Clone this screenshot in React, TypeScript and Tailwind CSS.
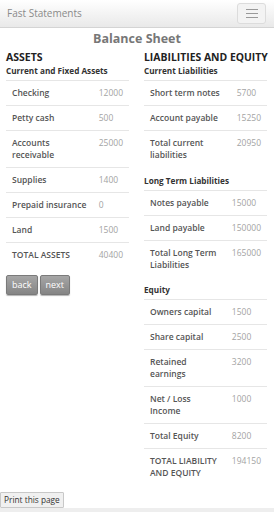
import React from "react";

type Row = { label: string; value: string };

const assets: Row[] = [
  { label: "Checking", value: "12000" },
  { label: "Petty cash", value: "500" },
  { label: "Accounts receivable", value: "25000" },
  { label: "Supplies", value: "1400" },
  { label: "Prepaid insurance", value: "0" },
  { label: "Land", value: "1500" },
  { label: "TOTAL ASSETS", value: "40400" },
];

const current: Row[] = [
  { label: "Short term notes", value: "5700" },
  { label: "Account payable", value: "15250" },
  { label: "Total current liabilities", value: "20950" },
];

const longTerm: Row[] = [
  { label: "Notes payable", value: "15000" },
  { label: "Land payable", value: "150000" },
  { label: "Total Long Term Liabilities", value: "165000" },
];

const equity: Row[] = [
  { label: "Owners capital", value: "1500" },
  { label: "Share capital", value: "2500" },
  { label: "Retained earnings", value: "3200" },
  { label: "Net / Loss Income", value: "1000" },
  { label: "Total Equity", value: "8200" },
  { label: "TOTAL LIABILITY AND EQUITY", value: "194150" },
];

function Table({ rows, narrow }: { rows: Row[]; narrow?: boolean }) {
  return (
    <table className="w-full border-collapse">
      <tbody>
        {rows.map((r, i) => (
          <tr
            key={i}
            className={i < rows.length - 1 ? "border-t border-b border-[#e6e6e6]" : "border-t border-[#e6e6e6]"}
          >
            <td
              className={
                (narrow ? "w-[82px] " : "w-[87px] ") +
                "px-[6px] py-[6px] align-top text-[8.5px] leading-[12px] font-semibold text-[#555]"
              }
            >
              {r.label}
            </td>
            <td className="px-[6px] py-[6px] align-top text-[8.5px] leading-[12px] text-[#a3a3a3]">{r.value}</td>
          </tr>
        ))}
      </tbody>
    </table>
  );
}

function SubHead({ children }: { children: React.ReactNode }) {
  return <div className="text-[8.2px] leading-[12px] font-bold text-[#333] pb-[3px]">{children}</div>;
}

export default function App() {
  return (
    <div
      className="w-[274px] h-[512px] bg-white overflow-hidden flex flex-col"
      style={{ fontFamily: "'Open Sans', 'Noto Sans', sans-serif" }}
    >
      <div className="h-[28px] shrink-0 flex items-center justify-between pl-[7px] pr-[8px] bg-gradient-to-b from-[#ffffff] to-[#e9e9e9] border-b border-[#d4d4d4]">
        <span className="text-[10px] text-[#8a8a8a]">Fast Statements</span>
        <div className="w-[29px] h-[21px] rounded-[3px] border border-[#dcdcdc] bg-[#f3f3f3] flex flex-col items-center justify-center gap-[3px]">
          <div className="w-[12px] h-[1px] bg-[#999]" />
          <div className="w-[12px] h-[1px] bg-[#999]" />
          <div className="w-[12px] h-[1px] bg-[#999]" />
        </div>
      </div>

      <div className="flex-1 flex flex-col">
        <div className="text-center text-[12.5px] leading-[18px] font-bold text-[#777] pt-[2px]">Balance Sheet</div>
        <div className="flex">
          <div className="w-[137px] pl-[6px] pr-[8px]">
            <div className="text-[10.5px] leading-[16px] font-bold text-[#222] pt-[1px]">ASSETS</div>
            <SubHead>Current and Fixed Assets</SubHead>
            <Table rows={assets} />
            <div className="flex gap-[2px] mt-[8px]">
              <button className="h-[20px] px-[5px] rounded-[2px] border border-[#7a7a7a] bg-gradient-to-b from-[#a6a6a6] to-[#858585] text-white text-[9px] shadow-[0_1px_1px_rgba(0,0,0,0.3)]">
                back
              </button>
              <button className="h-[20px] px-[5px] rounded-[2px] border border-[#7a7a7a] bg-gradient-to-b from-[#a6a6a6] to-[#858585] text-white text-[9px] shadow-[0_1px_1px_rgba(0,0,0,0.3)]">
                next
              </button>
            </div>
          </div>
          <div className="w-[137px] pl-[7px] pr-[7px]">
            <div className="text-[10.4px] leading-[16px] font-bold text-[#222] pt-[1px] whitespace-nowrap">
              LIABILITIES AND EQUITY
            </div>
            <SubHead>Current Liabilities</SubHead>
            <Table rows={current} />
            <div className="mt-[8px]">
              <SubHead>Long Term Liabilities</SubHead>
            </div>
            <Table rows={longTerm} narrow />
            <div className="mt-[7px]">
              <SubHead>Equity</SubHead>
            </div>
            <Table rows={equity} narrow />
          </div>
        </div>
      </div>

      <div className="shrink-0 relative h-[22px]">
        <div className="absolute left-0 bottom-[4px] h-[16px] px-[3px] border border-[#c8c8c8] bg-[#f0f0f0] text-[8.3px] leading-[14px] text-[#333] rounded-[1px]">
          Print this page
        </div>
        <div className="absolute left-0 right-0 bottom-0 h-[4px] bg-[#eeeeee]" />
      </div>
    </div>
  );
}
